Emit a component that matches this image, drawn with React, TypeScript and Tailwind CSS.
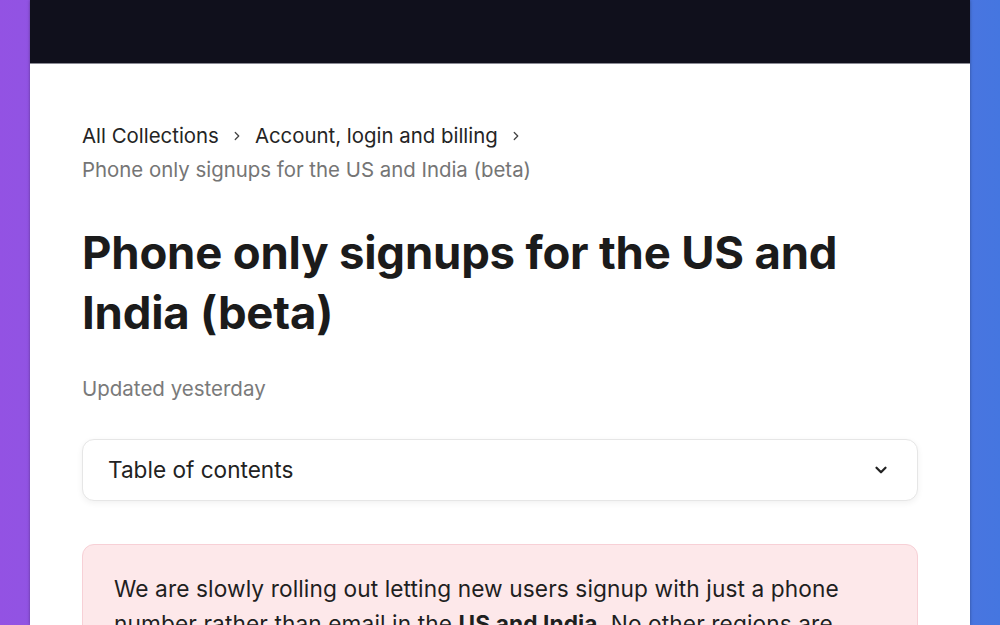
import React from "react";

export default function App() {
  return (
    <div
      className="h-[625px] w-[1000px] overflow-hidden bg-gradient-to-r from-[#9352e3] to-[#4576e0] px-[30px]"
      style={{ fontFamily: "Inter, 'Noto Sans', sans-serif" }}
    >
      <div className="h-full bg-white shadow-[0_0_3px_rgba(0,0,0,0.35)]">
        <div className="h-[64px] bg-[#10101c] border-b border-[#8a8a94]" />
        <div className="px-[52px] pt-[55px]">
          <nav className="text-[20.4px] leading-[34px]">
            <div className="flex items-center text-[#242424]">
              <span>All Collections</span>
              <svg className="mx-[11px]" width="14" height="14" viewBox="0 0 24 24" fill="none" stroke="#444" strokeWidth="2.2" strokeLinecap="round" strokeLinejoin="round">
                <path d="M9 6l6 6-6 6" />
              </svg>
              <span>Account, login and billing</span>
              <svg className="ml-[11px]" width="14" height="14" viewBox="0 0 24 24" fill="none" stroke="#444" strokeWidth="2.2" strokeLinecap="round" strokeLinejoin="round">
                <path d="M9 6l6 6-6 6" />
              </svg>
            </div>
            <div className="text-[#757575]">Phone only signups for the US and India (beta)</div>
          </nav>
          <h1 className="mt-[36px] text-[45.5px] leading-[60px] font-bold text-[#1b1b1b] tracking-[-0.2px]">
            Phone only signups for the US and
            <br />
            India (beta)
          </h1>
          <div className="mt-[29px] text-[20.5px] leading-[34px] text-[#7a7a7a]">Updated yesterday</div>
          <div className="mt-[33px] h-[62px] rounded-[12px] border border-[#e6e6e6] bg-white shadow-[0_2px_6px_rgba(0,0,0,0.06)] flex items-center justify-between pl-[25px] pr-[27px]">
            <span className="text-[22.6px] text-[#222]">Table of contents</span>
            <svg width="18" height="18" viewBox="0 0 24 24" fill="none" stroke="#222" strokeWidth="3" strokeLinecap="round" strokeLinejoin="round">
              <path d="M6 9l6 6 6-6" />
            </svg>
          </div>
          <div className="mt-[43px] rounded-[12px] border border-[#f7d0d6] bg-[#fde8ea] px-[31px] pt-[26px] pb-[30px] text-[22.7px] leading-[35px] text-[#1f1f1f] tracking-[0.1px]">
            We are slowly rolling out letting new users signup with just a phone number rather than email in the <b>US and India</b>. No other regions are supported at this time.
          </div>
        </div>
      </div>
    </div>
  );
}
